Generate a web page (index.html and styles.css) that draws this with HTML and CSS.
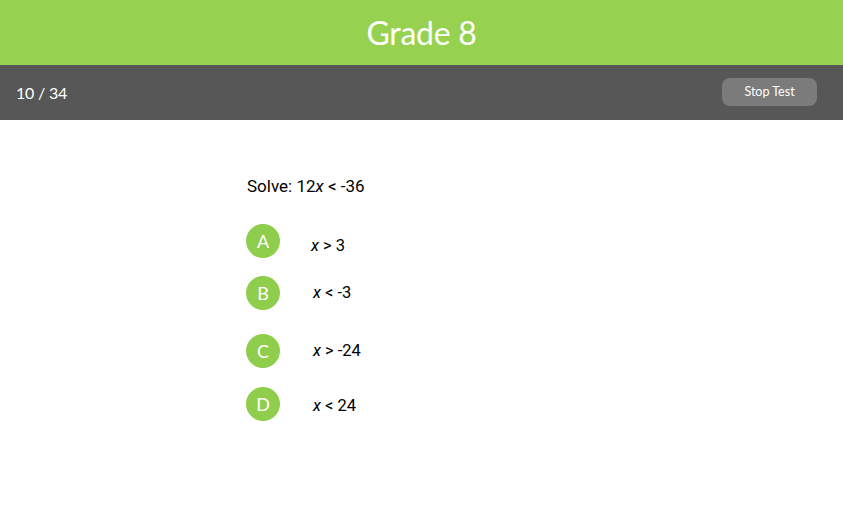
FILE: index.html
```html
<!DOCTYPE html>
<html>
<head>
<meta charset="utf-8">
<link rel="stylesheet" href="styles.css">
</head>
<body>
<header class="title-bar"><h1 class="title">Grade 8</h1></header>
<div class="status-bar">
  <span class="progress">10 / 34</span>
  <button class="stop-btn">Stop Test</button>
</div>
<main class="quiz">
  <p class="question">Solve: 12<i>x</i> &lt; -36</p>
  <ul class="options">
    <li class="option opt-a"><span class="badge">A</span><span class="answer ans-a"><i>x</i> &gt; 3</span></li>
    <li class="option opt-b"><span class="badge">B</span><span class="answer"><i>x</i> &lt; -3</span></li>
    <li class="option opt-c"><span class="badge">C</span><span class="answer"><i>x</i> &gt; -24</span></li>
    <li class="option opt-d"><span class="badge">D</span><span class="answer ans-d"><i>x</i> &lt; 24</span></li>
  </ul>
</main>
</body>
</html>
```
FILE: styles.css
```css
html, body { margin: 0; padding: 0; background: #fff; }
body { font-family: Roboto, "Liberation Sans", sans-serif; color: #000; }
.title-bar {
  height: 65px;
  background: #96d250;
  display: flex;
  align-items: center;
  justify-content: center;
}
.title {
  margin: 0;
  font-family: Lato, "Open Sans", sans-serif;
  font-weight: 400;
  font-size: 32px;
  color: #fff;
  letter-spacing: -0.3px;
}
.status-bar {
  height: 55px;
  background: #575757;
  display: flex;
  align-items: center;
  justify-content: space-between;
  padding: 0 26px 0 16px;
}
.progress {
  font-family: Lato, "Open Sans", sans-serif;
  color: #fff;
  font-size: 16px;
  letter-spacing: -0.2px;
}
.stop-btn {
  width: 95px;
  height: 28px;
  border: none;
  border-radius: 8px;
  background: #7b7b7b;
  color: #fff;
  font-family: Lato, "Open Sans", sans-serif;
  font-size: 12.5px;
  padding: 0;
  margin-top: -2px;
}
.quiz { padding: 56px 0 0 247px; }
.question { margin: 0; font-size: 17px; line-height: 20px; }
.options { list-style: none; margin: 0; padding: 0 0 0 0; }
.option { display: flex; align-items: center; height: 34px; margin-left: -1px; }
.opt-a { margin-top: 28px; }
.opt-b { margin-top: 18px; }
.opt-c { margin-top: 24px; }
.opt-d { margin-top: 19px; }
.badge {
  width: 34px;
  height: 34px;
  border-radius: 50%;
  background: #8fcd4c;
  color: #fff;
  font-family: Lato, "Open Sans", sans-serif;
  font-size: 18px;
  display: flex;
  align-items: center;
  justify-content: center;
  flex: none;
}
.answer { margin-left: 33px; font-size: 16.5px; line-height: 20px; }
.ans-a { margin-left: 31px; padding-top: 10px; }
.ans-d { padding-top: 4px; }
```
